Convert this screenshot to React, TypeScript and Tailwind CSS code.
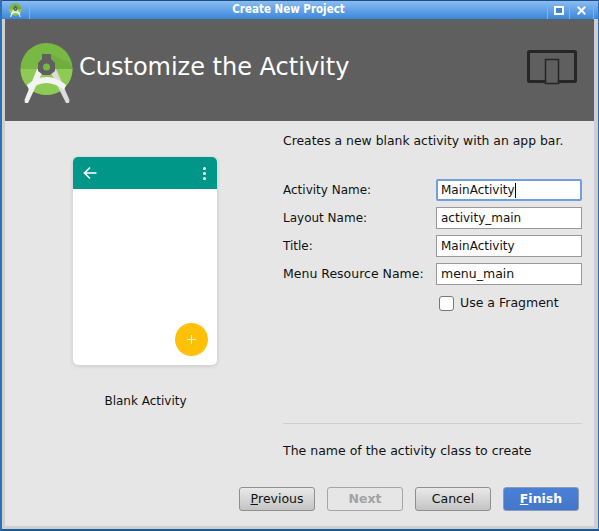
import { X } from "lucide-react";

const sans = "font-['DejaVu_Sans','Liberation_Sans',sans-serif]";

const fields = [
  { label: "Activity Name:", value: "MainActivity", focused: true, size: "text-[12px]" },
  { label: "Layout Name:", value: "activity_main", focused: false, size: "text-[12px]" },
  { label: "Title:", value: "MainActivity", focused: false, size: "text-[12px]" },
  { label: "Menu Resource Name:", value: "menu_main", focused: false, size: "text-[12.5px]" },
];

function StudioLogo({ size, className }: { size: number; className?: string }) {
  return (
    <svg width={size} height={(size * 60) / 54} viewBox="0 0 54 60" className={className}>
      <circle cx="26.5" cy="26" r="26" fill="#78b943" />
      <path d="M0.5 26 A26 26 0 0 0 52.5 26 Z" fill="#8ecb55" />
      <path d="M30 11 L50 20 A26 26 0 0 1 52.5 26 H34 Z" fill="#6fae3e" />
      <path d="M8 60 L5 60 L4.5 57 L17 26 L23 28 Z" fill="#f1f1f1" />
      <path d="M46 60 L49 60 L49.5 57 L36 26 L30 28 Z" fill="#dcdcdc" />
      <path d="M7 42 Q26.5 26 46 42 L44 47 Q26.5 33 9 47 Z" fill="#f4f4f4" />
      <path d="M22 11 H31 V16 L35 20 V28 L30 32 H23 L18 28 V20 L22 16 Z" fill="#5f5f5f" />
      <circle cx="26.5" cy="24" r="3.5" fill="#78b943" />
    </svg>
  );
}

function DialogButton({ label, mnemonic, rest, kind }: { label?: string; mnemonic?: string; rest?: string; kind: "normal" | "disabled" | "primary" }) {
  const style =
    kind === "primary"
      ? "border-[#8a9bb3] bg-gradient-to-b from-[#4b80d8] to-[#4476c9] text-white font-bold"
      : kind === "disabled"
        ? "border-[#a5a5a5] bg-[#e6e6e6] text-[#a3a3a3] font-bold"
        : "border-[#8f8f8f] bg-gradient-to-b from-[#e9e9e9] to-[#c4c4c4] text-[#111]";
  return (
    <div className={`w-[76px] h-[24px] flex items-center justify-center rounded-[3px] border text-[12.5px] ${style}`}>
      {mnemonic && <span className="underline">{mnemonic}</span>}
      {rest}
      {label}
    </div>
  );
}

export default function App() {
  return (
    <div className={`w-[599px] h-[531px] flex flex-col overflow-hidden bg-[#e6e6e6] border-l-2 border-r border-b-2 border-l-[#2f6fb5] border-r-[#2f6fb5] border-b-[#1c5a94] ${sans}`}>
      {/* Title bar */}
      <div className="h-[19px] shrink-0 flex items-center bg-gradient-to-b from-[#8abcf0] to-[#3a86dc] border-t border-[#1c4f86]">
        <div className="w-[28px] flex justify-center border-r border-[#7fb2e8] h-full items-center">
          <StudioLogo size={13} />
        </div>
        <div className="flex-1 text-center text-white font-bold text-[11.5px] leading-none font-['DejaVu_Sans_Condensed','DejaVu_Sans',sans-serif]">
          Create New Project
        </div>
        <div className="w-[22px] h-full flex items-center justify-center border-l border-[#7fb2e8]">
          <div className="w-[10px] h-[9px] border-2 border-white bg-[#3a86dc]" />
        </div>
        <div className="w-[24px] h-full flex items-center justify-center border-l border-[#7fb2e8]">
          <X size={13} strokeWidth={3.5} className="text-white" />
        </div>
        <div className="w-[5px] h-full border-l border-[#7fb2e8]" />
      </div>

      <div className="flex-1 flex flex-col border-l-[3px] border-r-[4px] border-b-[3px] border-[#cfcfcf] min-h-0">
        {/* Banner */}
        <div className="h-[102px] shrink-0 bg-[#5f5f5f] flex items-center pl-[15px] pr-[17px]">
          <StudioLogo size={54} className="mb-[-6px]" />
          <div className="ml-[5px] mb-[6px] text-white text-[24px] leading-none">Customize the Activity</div>
          <svg width="50" height="36" viewBox="0 0 50 36" className="ml-auto mb-[4px]">
            <rect x="1.5" y="1.5" width="47" height="30" rx="1" fill="none" stroke="#262626" strokeWidth="3" />
            <rect x="18.5" y="9.5" width="13" height="24" fill="#5f5f5f" stroke="#262626" strokeWidth="1.5" />
          </svg>
        </div>

        <div className="flex-1 flex min-h-0">
          {/* Template preview */}
          <div className="w-[278px] shrink-0 flex flex-col items-center pt-[36px] pl-[2px]">
            <div className="w-[144px] h-[208px] rounded-[5px] bg-white shadow-[0_1px_4px_rgba(0,0,0,0.14)] overflow-hidden flex flex-col">
              <div className="h-[32px] bg-[#009688] flex items-center justify-between pl-[10px] pr-[11px]">
                <svg width="14" height="14" viewBox="0 0 14 14" fill="none" stroke="white" strokeWidth="1.6">
                  <path d="M13.5 7H1.5M7 1.5L1.5 7L7 12.5" />
                </svg>
                <div className="flex flex-col gap-[2px]">
                  <div className="w-[3px] h-[3px] rounded-full bg-white" />
                  <div className="w-[3px] h-[3px] rounded-full bg-white" />
                  <div className="w-[3px] h-[3px] rounded-full bg-white" />
                </div>
              </div>
              <div className="flex-1 flex items-end justify-end pr-[9px] pb-[9px]">
                <div className="w-[33px] h-[33px] rounded-full bg-[#ffc107] flex items-center justify-center">
                  <svg width="9" height="9" viewBox="0 0 9 9" stroke="white" strokeWidth="1">
                    <path d="M4.5 0V9M0 4.5H9" />
                  </svg>
                </div>
              </div>
            </div>
            <div className="mt-[28px] ml-[1px] text-[12px] leading-[16px] text-[#111]">Blank Activity</div>
          </div>

          {/* Form */}
          <div className="flex-1 flex flex-col min-w-0 pr-[12px] pt-[12px]">
            <div className="text-[12.4px] leading-[16px] text-[#111] whitespace-nowrap">Creates a new blank activity with an app bar.</div>
            <div className="mt-[30px] flex flex-col gap-[6px]">
              {fields.map((f) => (
                <div key={f.label} className={`flex items-center h-[22px] text-[#111] ${f.size}`}>
                  <div className="w-[153px] shrink-0">{f.label}</div>
                  <div className={`w-[146px] h-[22px] bg-white flex items-center ${f.focused ? "pl-[3px] border-2 border-[#6f9fdc] rounded-[2px]" : "pl-[4px] border border-[#999]"}`}>
                    {f.value}
                    {f.focused && <span className="w-px h-[15px] bg-black" />}
                  </div>
                </div>
              ))}
            </div>
            <div className="mt-[7px] ml-[156px] h-[22px] flex items-center gap-[6px] text-[12.5px] text-[#111]">
              <div className="w-[15px] h-[15px] rounded-[3px] border border-[#777] bg-white" />
              Use a Fragment
            </div>
            <div className="mt-[109px] border-t border-[#cfcfcf] pt-[19px] text-[12.5px] leading-[16px] text-[#111]">
              The name of the activity class to create
            </div>
          </div>
        </div>

        {/* Footer */}
        <div className="shrink-0 flex justify-end gap-[12px] pr-[15px] pb-[15px]">
          <DialogButton kind="normal" mnemonic="P" rest="revious" />
          <DialogButton kind="disabled" label="Next" />
          <DialogButton kind="normal" label="Cancel" />
          <DialogButton kind="primary" mnemonic="F" rest="inish" />
        </div>
      </div>
    </div>
  );
}
